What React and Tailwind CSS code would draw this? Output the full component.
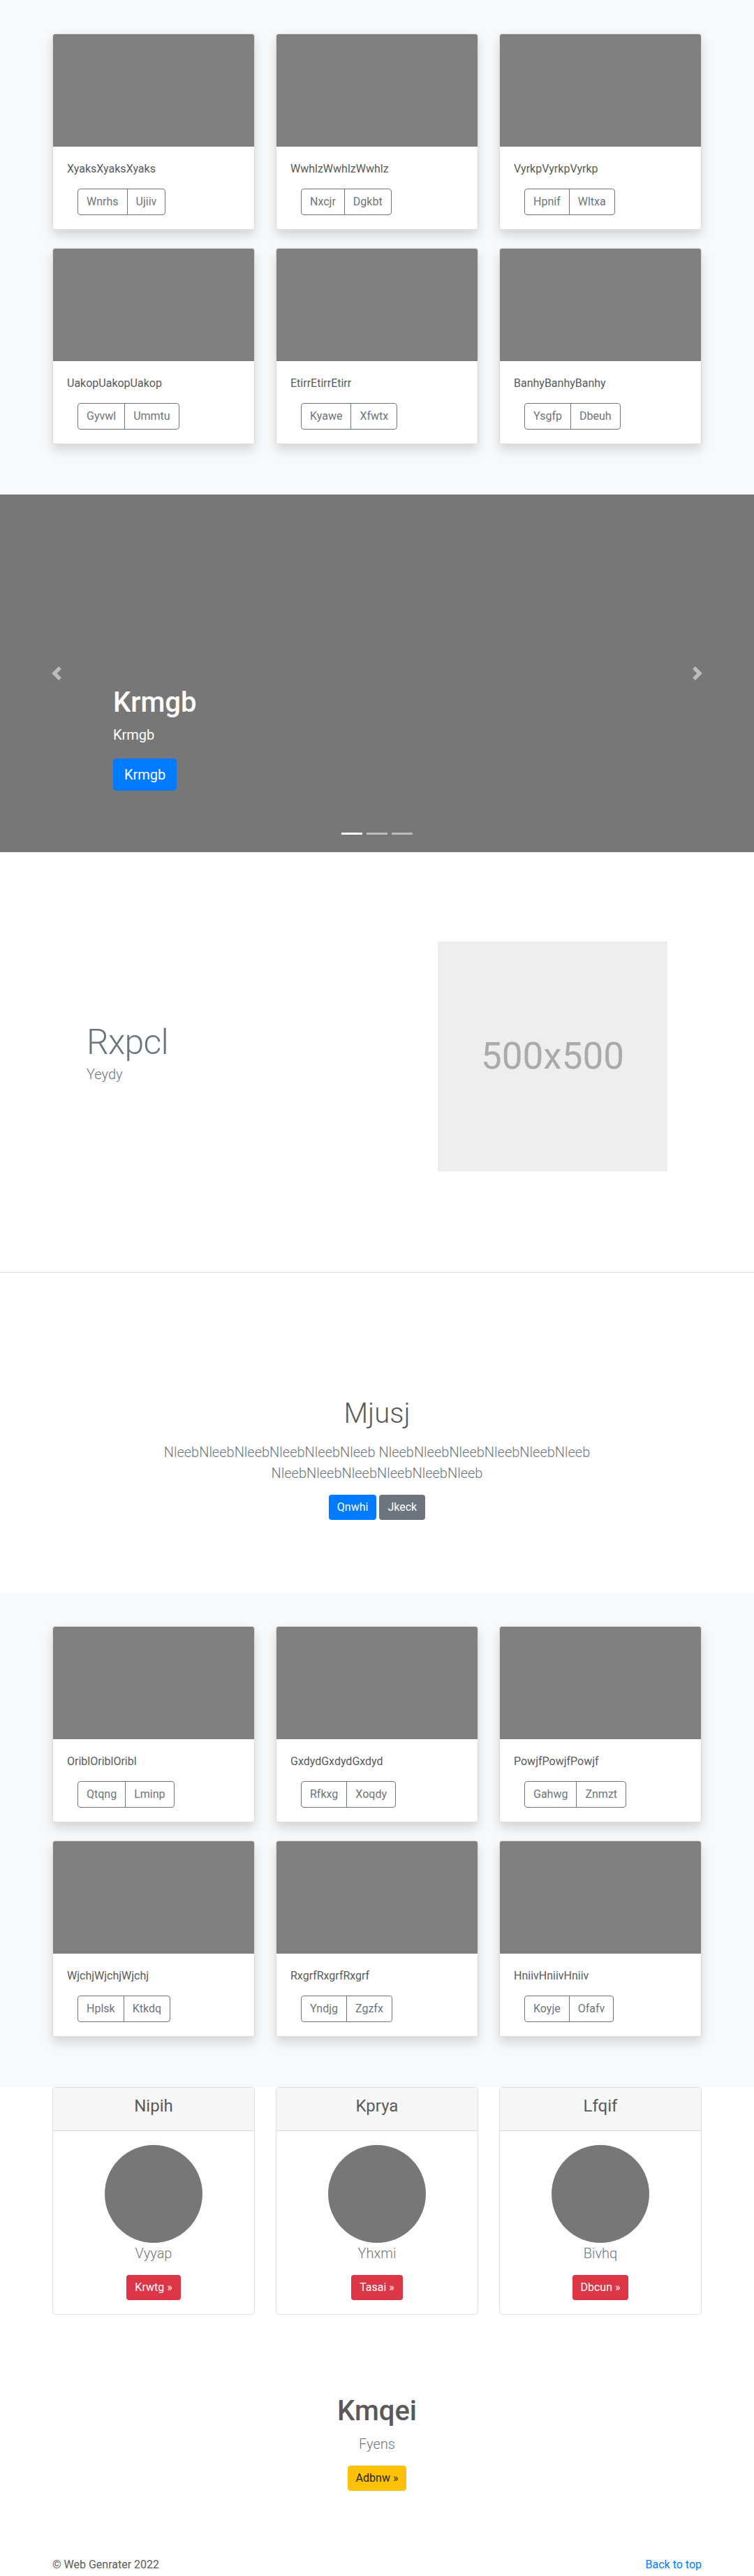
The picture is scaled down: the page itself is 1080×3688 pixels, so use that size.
const font = { fontFamily: '"Segoe UI", Roboto, "Liberation Sans", sans-serif' }

const albumOne = [
  { title: 'XyaksXyaksXyaks', a: 'Wnrhs', b: 'Ujiiv' },
  { title: 'WwhlzWwhlzWwhlz', a: 'Nxcjr', b: 'Dgkbt' },
  { title: 'VyrkpVyrkpVyrkp', a: 'Hpnif', b: 'Wltxa' },
  { title: 'UakopUakopUakop', a: 'Gyvwl', b: 'Ummtu' },
  { title: 'EtirrEtirrEtirr', a: 'Kyawe', b: 'Xfwtx' },
  { title: 'BanhyBanhyBanhy', a: 'Ysgfp', b: 'Dbeuh' },
]

const albumTwo = [
  { title: 'OriblOriblOribl', a: 'Qtqng', b: 'Lminp' },
  { title: 'GxdydGxdydGxdyd', a: 'Rfkxg', b: 'Xoqdy' },
  { title: 'PowjfPowjfPowjf', a: 'Gahwg', b: 'Znmzt' },
  { title: 'WjchjWjchjWjchj', a: 'Hplsk', b: 'Ktkdq' },
  { title: 'RxgrfRxgrfRxgrf', a: 'Yndjg', b: 'Zgzfx' },
  { title: 'HniivHniivHniiv', a: 'Koyje', b: 'Ofafv' },
]

const people = [
  { head: 'Nipih', name: 'Vyyap', btn: 'Krwtg »' },
  { head: 'Kprya', name: 'Yhxmi', btn: 'Tasai »' },
  { head: 'Lfqif', name: 'Bivhq', btn: 'Dbcun »' },
]

function AlbumCard({ item }) {
  return (
    <div className="bg-white border border-black/[.125] rounded overflow-hidden shadow-[0_8px_16px_rgba(0,0,0,0.15)]">
      <div className="h-[161px] bg-[#808080]" />
      <div className="p-5">
        <p className="text-base leading-6 mb-4 text-[#5a5a5a]">{item.title}</p>
        <div className="ml-[15px] inline-flex">
          <button className="border border-[#6c757d] text-[#6c757d] text-base leading-6 px-3 py-1.5 rounded-l">
            {item.a}
          </button>
          <button className="-ml-px border border-[#6c757d] text-[#6c757d] text-base leading-6 px-3 py-1.5 rounded-r">
            {item.b}
          </button>
        </div>
      </div>
    </div>
  )
}

function Album({ items }) {
  return (
    <section className="bg-[#f8f9fa] pt-12 pb-[72px]">
      <div className="w-[930px] mx-auto grid grid-cols-3 gap-x-[30px] gap-y-[26px]">
        {items.map((item) => (
          <AlbumCard key={item.title} item={item} />
        ))}
      </div>
    </section>
  )
}

function Carousel() {
  return (
    <section className="relative h-[512px] bg-[#777777] overflow-hidden">
      <div className="absolute left-0 top-0 h-full w-[162px] flex items-center justify-center opacity-50">
        <svg width="20" height="20" viewBox="0 0 8 8" fill="#fff">
          <path d="M5.25 0l-4 4 4 4 1.5-1.5L4.25 4l2.5-2.5L5.25 0z" />
        </svg>
      </div>
      <div className="absolute right-0 top-0 h-full w-[162px] flex items-center justify-center opacity-50">
        <svg width="20" height="20" viewBox="0 0 8 8" fill="#fff">
          <path d="M2.75 0l-1.5 1.5L3.75 4l-2.5 2.5L2.75 8l4-4-4-4z" />
        </svg>
      </div>
      <div className="h-full flex flex-col justify-end pl-[162px] pr-[162px] pb-[88px] text-white">
        <h1 className="text-[40px] leading-[48px] font-medium mb-2">Krmgb</h1>
        <p className="text-xl leading-7 mb-5">Krmgb</p>
        <div>
          <button className="bg-[#007bff] text-white text-xl leading-[30px] px-4 py-2 rounded-[5px]">Krmgb</button>
        </div>
      </div>
      <div className="absolute bottom-[25px] left-0 right-0 flex justify-center">
        <span className="w-[30px] h-[3px] mx-[3px] bg-white" />
        <span className="w-[30px] h-[3px] mx-[3px] bg-white/50" />
        <span className="w-[30px] h-[3px] mx-[3px] bg-white/50" />
      </div>
    </section>
  )
}

function Featurette() {
  return (
    <section className="bg-white pt-[128px] pb-[144px] px-[124px] flex items-center justify-between border-b border-[#e2e2e2]">
      <div className="-mt-[6px]">
        <h2 className="text-[50px] leading-none font-light tracking-[-0.05rem] text-[#6c757d] mb-[6px]">Rxpcl</h2>
        <p className="text-xl leading-[30px] font-light text-[#6c757d]">Yeydy</p>
      </div>
      <div className="w-[329px] h-[329px] bg-[#eeeeee] flex items-center justify-center">
        <span className="text-[53px] text-[#aaaaaa]">500x500</span>
      </div>
    </section>
  )
}

function Jumbotron() {
  return (
    <section className="bg-white h-[458px] pt-[178px] text-center">
      <h1 className="text-[40px] leading-[48px] font-light text-[#5a5a5a] mb-4">Mjusj</h1>
      <p className="w-[640px] mx-auto text-xl leading-[30px] font-light text-[#6c757d] mb-4">
        NleebNleebNleebNleebNleebNleeb NleebNleebNleebNleebNleebNleeb NleebNleebNleebNleebNleebNleeb
      </p>
      <div className="flex justify-center gap-1">
        <button className="bg-[#007bff] text-white text-base leading-6 px-3 py-1.5 rounded">Qnwhi</button>
        <button className="bg-[#6c757d] text-white text-base leading-6 px-3 py-1.5 rounded">Jkeck</button>
      </div>
    </section>
  )
}

function People() {
  return (
    <section className="bg-white">
      <div className="w-[930px] mx-auto grid grid-cols-3 gap-x-[30px]">
        {people.map((p) => (
          <div key={p.head} className="border border-black/[.125] rounded overflow-hidden text-center">
            <div className="bg-[#f7f7f7] border-b border-black/[.125] pt-3 pb-5">
              <h4 className="text-2xl leading-[29px] text-[#5a5a5a]">{p.head}</h4>
            </div>
            <div className="p-5 flex flex-col items-center">
              <div className="w-[140px] h-[140px] rounded-full bg-[#777777]" />
              <p className="text-xl leading-[30px] font-light text-[#6c757d] mb-4">{p.name}</p>
              <button className="bg-[#dc3545] text-white text-base leading-6 px-3 py-1.5 rounded">{p.btn}</button>
            </div>
          </div>
        ))}
      </div>
    </section>
  )
}

export default function App() {
  return (
    <div className="bg-white text-[#5a5a5a]" style={font}>
      <Album items={albumOne} />
      <Carousel />
      <Featurette />
      <Jumbotron />
      <Album items={albumTwo} />
      <People />
      <section className="pt-[114px] text-center">
        <h1 className="text-[40px] leading-[48px] font-medium text-[#5a5a5a] mb-2">Kmqei</h1>
        <p className="text-xl leading-[30px] font-light text-[#6c757d] mb-4">Fyens</p>
        <button className="bg-[#ffc107] text-[#212529] text-base leading-6 px-3 py-1.5 rounded">Adbnw »</button>
      </section>
      <footer className="w-[930px] mx-auto pt-[94px] pb-6 flex justify-between text-base leading-6">
        <p className="text-[#5a5a5a]">© Web Genrater 2022</p>
        <a href="#" className="text-[#007bff]">Back to top</a>
      </footer>
    </div>
  )
}
